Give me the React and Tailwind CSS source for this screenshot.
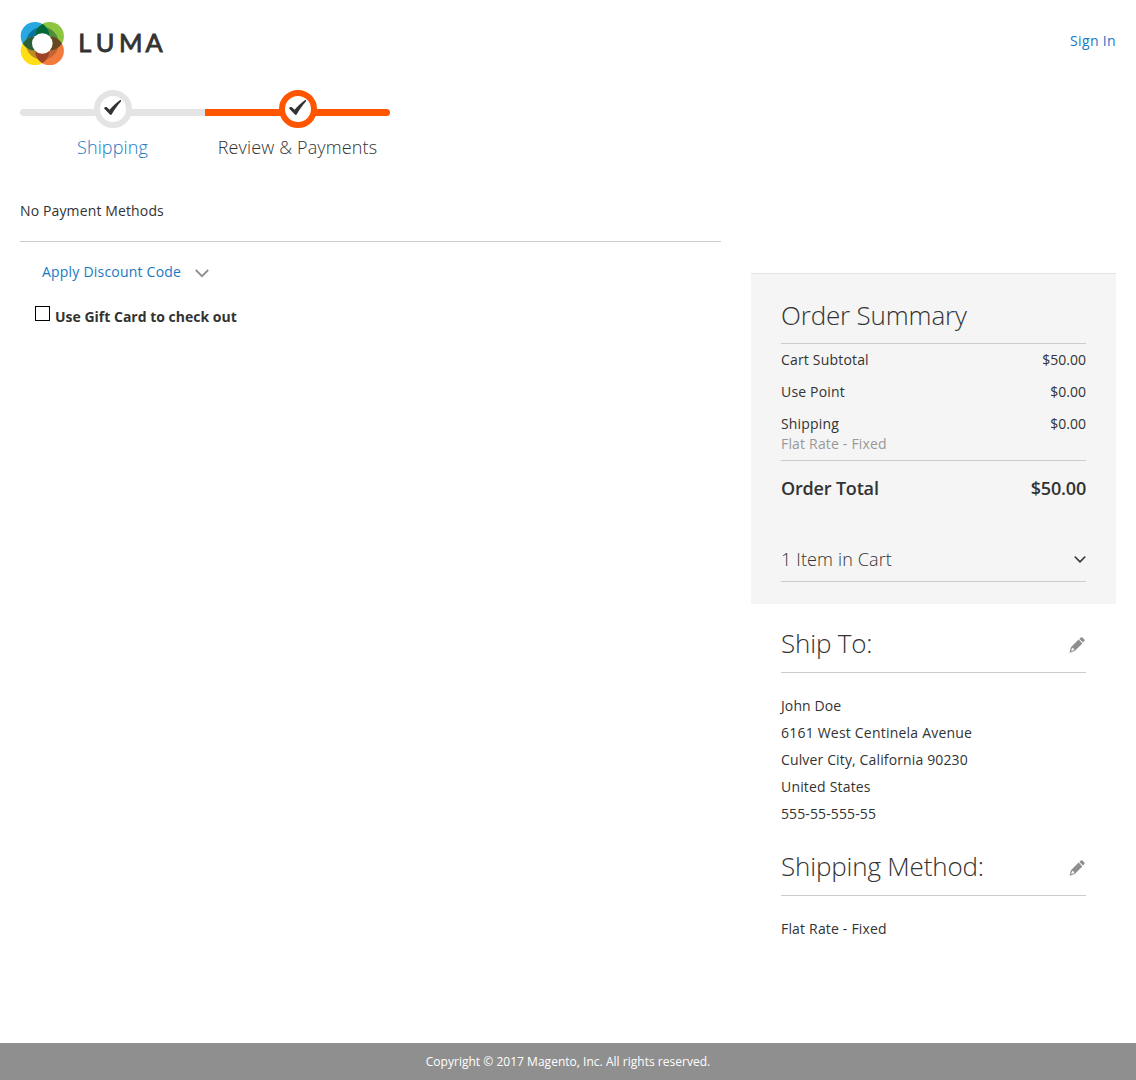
import React from "react";

function Logo() {
  return (
    <svg width="148" height="50" viewBox="0 0 148 50" role="img" aria-label="Luma">
      <defs>
        <clipPath id="tl"><circle cx="15" cy="16.2" r="14.3" /></clipPath>
        <clipPath id="tr"><circle cx="29.6" cy="16.2" r="14.3" /></clipPath>
        <clipPath id="bl"><circle cx="15" cy="30.8" r="14.3" /></clipPath>
        <clipPath id="br"><circle cx="29.6" cy="30.8" r="14.3" /></clipPath>
      </defs>
      <circle cx="15" cy="16.2" r="14.3" fill="#27a8e0" />
      <circle cx="29.6" cy="16.2" r="14.3" fill="#8cc540" />
      <circle cx="15" cy="30.8" r="14.3" fill="#ffde17" />
      <circle cx="29.6" cy="30.8" r="14.3" fill="#f37a3d" />
      <circle cx="22.3" cy="23.5" r="16.4" fill="#08749f" clipPath="url(#tl)" />
      <circle cx="22.3" cy="23.5" r="16.4" fill="#4c8b37" clipPath="url(#tr)" />
      <circle cx="22.3" cy="23.5" r="16.4" fill="#bc8d27" clipPath="url(#bl)" />
      <circle cx="22.3" cy="23.5" r="16.4" fill="#c36334" clipPath="url(#br)" />
      <g clipPath="url(#tl)">
        <circle cx="29.6" cy="16.2" r="14.3" fill="#00683a" />
        <circle cx="15" cy="30.8" r="14.3" fill="#2c6038" />
      </g>
      <g clipPath="url(#br)">
        <circle cx="29.6" cy="16.2" r="14.3" fill="#62471f" />
        <circle cx="15" cy="30.8" r="14.3" fill="#9d4423" />
      </g>
      <circle cx="22.3" cy="23.5" r="10.3" fill="#fff" />
      <text x="58.3 75.7 99.1 125.4" y="32.2" fill="#333" stroke="#333" strokeWidth="0.9" fontFamily="Lato, sans-serif" fontSize="25.3" fontWeight="400">LUMA</text>
    </svg>
  );
}

function Step({ label, active }) {
  return (
    <li className="w-[185px]">
      <div className="grid h-[38px] place-items-center">
        <div className={`col-start-1 row-start-1 mt-[7px] h-[7px] w-full ${active ? "rounded-r-[6px] bg-[#ff5501]" : "rounded-l-[6px] bg-[#e4e4e4]"}`} />
        <div className={`z-10 col-start-1 row-start-1 flex size-[38px] items-center justify-center rounded-full border-[6px] bg-white ${active ? "border-[#ff5501]" : "border-[#e4e4e4]"}`}>
          <svg width="26" height="26" viewBox="0 0 26 26" className="shrink-0">
            <path d="M4.1 12.4 C4.1 11.4 6.2 10.5 7.1 11.4 L9.7 13.8 C12.7 10.3 16.5 6.6 19.8 4.3 C20.8 3.6 21.5 4.5 20.9 5.4 C17.5 9.3 14.2 13.7 11.8 18.3 C11.3 19.1 10.5 19.1 9.9 18.5 Z" fill="#333" />
          </svg>
        </div>
      </div>
      <div className={`mt-[7px] text-center text-lg leading-[25px] font-light tracking-[0.14px] ${active ? "text-[#333]" : "text-[#1979c3]"}`}>{label}</div>
    </li>
  );
}

function Chevron({ className, width }) {
  return (
    <svg className={className} width={width} height="9" viewBox="0 0 14 9" fill="none" stroke="currentColor" strokeWidth="1.8">
      <path d="M0.8 1 L7 7.2 L13.2 1" />
    </svg>
  );
}

function Pencil() {
  return (
    <svg width="16" height="16" viewBox="0 0 16 16" fill="#8f8f8f">
      <path fillRule="evenodd" d="M9.6 2.6 L13.4 6.4 L5.7 14 L0.5 15.7 L1.9 10.2 Z M3 11.2 L2.2 14.1 L4.9 13.2 L5.4 11.8 L4.2 11.7 L4.1 10.8 Z" />
      <path d="M10.3 1.9 L11.9 0.5 Q12.7 -0.1 13.5 0.6 L15.4 2.5 Q16 3.3 15.4 4 L14.1 5.6 Z" />
    </svg>
  );
}

function Row({ label, value }) {
  return (
    <div className="flex h-8 items-center justify-between leading-5">
      <span>{label}</span><span className="tracking-normal">{value}</span>
    </div>
  );
}

function SectionTitle({ children }) {
  return (
    <div className="flex h-[51px] items-start justify-between border-b border-[#ccc]">
      <h2 className="text-[26px] leading-[42px] font-light tracking-[-0.17px]">{children}</h2>
      <button className="mt-[15px] mr-px" aria-label="Edit"><Pencil /></button>
    </div>
  );
}

export default function App() {
  return (
    <div className="flex min-h-[1080px] flex-col bg-white font-['Open_Sans',sans-serif] text-sm tracking-[0.18px] text-[#333]">
      <header className="flex h-[90px] items-start justify-between px-5 pt-5">
        <Logo />
        <a className="mt-[11px] leading-5 tracking-[0.35px] text-[#1979c3]">Sign In</a>
      </header>
      <main className="grid grow grid-cols-[701px_365px] content-start gap-x-[30px] px-5">
        <section>
          <ol className="flex">
            <Step label="Shipping" />
            <Step label="Review & Payments" active />
          </ol>
          <p className="mt-[41px] leading-5 tracking-[0.13px]">No Payment Methods</p>
          <div className="mt-5 border-t border-[#ccc] pt-5 pl-[22px]">
            <div className="flex items-center leading-5 tracking-[0.21px] text-[#1979c3]">
              Apply Discount Code
              <Chevron className="mt-[2px] ml-[14px] text-[#8f8f8f]" width={14} />
            </div>
          </div>
          <div className="mt-[24px] ml-[15px] flex">
            <span className="size-[15px] border border-black bg-white" />
            <label className="mt-px ml-[5px] leading-5 font-bold tracking-normal">Use Gift Card to check out</label>
          </div>
        </section>
        <aside className="pt-[183px]">
          <section className="h-[331px] border-t border-[#e4e4e4] bg-[#f5f5f5] px-[30px] pt-5">
            <h2 className="h-[49px] text-[26px] leading-[42px] font-light tracking-[-0.17px]">Order Summary</h2>
            <div className="border-y border-[#ccc]">
              <Row label="Cart Subtotal" value="$50.00" />
              <Row label="Use Point" value="$0.00" />
              <Row label="Shipping" value="$0.00" />
              <div className="-mt-[6px] h-[26px] leading-5 text-[#999]">Flat Rate - Fixed</div>
            </div>
            <div className="flex h-[54px] items-center justify-between text-lg leading-[25px] font-semibold tracking-[-0.18px]">
              <span>Order Total</span><span>$50.00</span>
            </div>
            <div className="mt-[22px] flex h-[45px] items-center justify-between border-b border-[#ccc] text-lg leading-[25px] font-light tracking-[0.14px]">
              <span>1 Item in Cart</span>
              <Chevron className="mt-px" width={12} />
            </div>
          </section>
          <section className="px-[30px] pt-[18px]">
            <SectionTitle>Ship To:</SectionTitle>
            <address className="mt-[19px] leading-[27px] not-italic">
              <div className="tracking-[0.1px]">John Doe</div>
              <div className="tracking-[0.21px]">6161 West Centinela Avenue</div>
              <div className="tracking-[0.14px]">Culver City, California 90230</div>
              <div>United States</div>
              <div className="tracking-[0.12px]">555-55-555-55</div>
            </address>
          </section>
          <section className="px-[30px] pt-[18px]">
            <SectionTitle>Shipping Method:</SectionTitle>
            <p className="mt-[19px] leading-[27px]">Flat Rate - Fixed</p>
          </section>
        </aside>
      </main>
      <footer className="flex h-[37px] items-center justify-center bg-[#8f8f8f] text-xs tracking-[0.02px] text-white">
        Copyright © 2017 Magento, Inc. All rights reserved.
      </footer>
    </div>
  );
}
